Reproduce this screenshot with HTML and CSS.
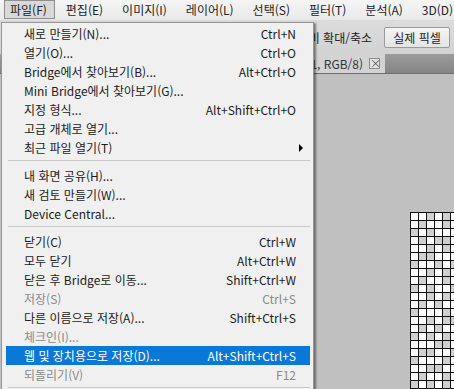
FILE: index.html
```html
<!DOCTYPE html>
<html lang="ko">
<head>
    <meta charset="UTF-8">
    <title>Photoshop - 파일 메뉴</title>
    <link rel="stylesheet" href="styles.css">
</head>
<body>

<div class="app">
    <div class="menubar">
        <span class="menu-title active">파일(F)</span>
        <span class="menu-title">편집(E)</span>
        <span class="menu-title">이미지(I)</span>
        <span class="menu-title">레이어(L)</span>
        <span class="menu-title">선택(S)</span>
        <span class="menu-title">필터(T)</span>
        <span class="menu-title">분석(A)</span>
        <span class="menu-title">3D(D)</span>
    </div>

    <div class="toolbar">
        <span class="zoom-label">비 확대/축소</span>
        <button class="tool-btn">실제 픽셀</button>
    </div>

    <div class="tabbar">
        <div class="doc-tab">
            <span class="doc-name">1, RGB/8)</span>
            <span class="tab-close">×</span>
        </div>
    </div>

    <div class="canvas">
        <div class="pixel-grid" id="pixelGrid"></div>
    </div>

    <!-- open File menu -->
    <div class="dropdown">
        <div class="item"><span>새로 만들기(N)...</span><span class="key">Ctrl+N</span></div>
        <div class="item"><span>열기(O)...</span><span class="key">Ctrl+O</span></div>
        <div class="item"><span>Bridge에서 찾아보기(B)...</span><span class="key">Alt+Ctrl+O</span></div>
        <div class="item"><span>Mini Bridge에서 찾아보기(G)...</span></div>
        <div class="item"><span>지정 형식...</span><span class="key">Alt+Shift+Ctrl+O</span></div>
        <div class="item"><span>고급 개체로 열기...</span></div>
        <div class="item"><span>최근 파일 열기(T)</span><span class="arrow"></span></div>
        <div class="sep"></div>
        <div class="item"><span>내 화면 공유(H)...</span></div>
        <div class="item"><span>새 검토 만들기(W)...</span></div>
        <div class="item"><span>Device Central...</span></div>
        <div class="sep"></div>
        <div class="item"><span>닫기(C)</span><span class="key">Ctrl+W</span></div>
        <div class="item"><span>모두 닫기</span><span class="key">Alt+Ctrl+W</span></div>
        <div class="item"><span>닫은 후 Bridge로 이동...</span><span class="key">Shift+Ctrl+W</span></div>
        <div class="item disabled"><span>저장(S)</span><span class="key">Ctrl+S</span></div>
        <div class="item"><span>다른 이름으로 저장(A)...</span><span class="key">Shift+Ctrl+S</span></div>
        <div class="item disabled"><span>체크인(I)...</span></div>
        <div class="item selected"><span>웹 및 장치용으로 저장(D)...</span><span class="key">Alt+Shift+Ctrl+S</span></div>
        <div class="item disabled"><span>되돌리기(V)</span><span class="key">F12</span></div>
        <div class="sep"></div>
    </div>
</div>

<script>
    // 1 = gray pixel, 0 = white pixel
    var rows = [
        "001010", "010010", "101000", "010110", "001010", "011000",
        "100101", "001010", "010010", "101001", "001010", "010100",
        "100010", "001011", "010100", "101010", "000110", "011001",
        "100010", "001100", "010010", "101010"
    ];
    var grid = document.getElementById('pixelGrid');
    for (var r = 0; r < rows.length; r++) {
        for (var c = 0; c < rows[r].length; c++) {
            var cell = document.createElement('div');
            cell.className = rows[r][c] === '1' ? 'px gray' : 'px';
            grid.appendChild(cell);
        }
    }
</script>

</body>
</html>
```

FILE: styles.css
```css
* {
    box-sizing: border-box;
}

body {
    margin: 0;
    font-family: "Noto Sans CJK KR", "Noto Sans", sans-serif;
    font-size: 12px;
    color: #1b1b1b;
    overflow: hidden;
}

.app {
    position: relative;
    width: 454px;
    height: 389px;
    display: flex;
    flex-direction: column;
    overflow: hidden;
    background: #c0c0c0;
}

/* menu bar */
.menubar {
    height: 22px;
    display: flex;
    align-items: center;
    padding-left: 4px;
    background: linear-gradient(#f5f5f5, #e9e9e9);
    border-bottom: 1px solid #dadada;
    white-space: nowrap;
}

.menu-title {
    flex-shrink: 0;
    height: 19px;
    line-height: 17px;
    padding: 0 7px 0 5px;
    margin-right: 5px;
    color: #222;
    border: 1px solid transparent;
}

.menu-title.active {
    background: #d9d9d9;
    border-color: #8e8e8e;
}

/* options bar */
.toolbar {
    height: 35px;
    display: flex;
    align-items: center;
    justify-content: flex-end;
    gap: 12px;
    padding-right: 4px;
    background: linear-gradient(#dcdcdc, #d2d2d2);
}

.zoom-label {
    color: #222;
}

.tool-btn {
    height: 21px;
    width: 66px;
    padding: 0;
    font: inherit;
    color: #222;
    background: linear-gradient(#f4f4f4, #e4e4e4);
    border: 1px solid #9a9a9a;
    border-radius: 2px;
}

/* document tabs */
.tabbar {
    height: 21px;
    display: flex;
    background: linear-gradient(#9c9c9c, #858585);
    border-bottom: 1px solid #6e6e6e;
}

.doc-tab {
    width: 240px;
    margin-left: 145px;
    display: flex;
    justify-content: flex-end;
    align-items: center;
    gap: 6px;
    padding-right: 5px;
    background: #d3d3d3;
    white-space: nowrap;
    overflow: hidden;
    color: #333;
}

.tab-close {
    width: 11px;
    height: 11px;
    line-height: 9px;
    text-align: center;
    font-size: 11px;
    color: #555;
    border: 1px solid #8a8a8a;
    background: #e4e4e4;
}

/* work area */
.canvas {
    flex: 1;
    padding: 138px 0 0 410px;
    background: #c0c0c0;
}

.pixel-grid {
    display: grid;
    grid-template-columns: repeat(6, 7px);
    grid-auto-rows: 7px;
    gap: 1px;
    padding: 1px;
    width: max-content;
    background: #111;
}

.px {
    background: #fff;
}

.px.gray {
    background: #cfcfcf;
}

/* dropdown */
.dropdown {
    position: absolute;
    top: 22px;
    left: 1px;
    width: 313px;
    padding: 1px 3px 0 4px;
    background: #f0f0f0;
    border: 1px solid #979797;
    box-shadow: 3px 0 2px -1px rgba(0, 0, 0, 0.45);
}

.item {
    height: 19px;
    display: flex;
    align-items: center;
    justify-content: space-between;
    padding: 0 14px 0 18px;
    white-space: nowrap;
    color: #1b1b1b;
}

.item.disabled {
    color: #8a8a8a;
}

.item.selected {
    background: #0a78d6;
    color: #fff;
}

.arrow {
    width: 0;
    height: 0;
    margin-right: -7px;
    border-top: 4px solid transparent;
    border-bottom: 4px solid transparent;
    border-left: 4px solid #000;
}

.sep {
    height: 1px;
    margin: 3px 0 5px 2px;
    background: #c8c8c8;
}
```
